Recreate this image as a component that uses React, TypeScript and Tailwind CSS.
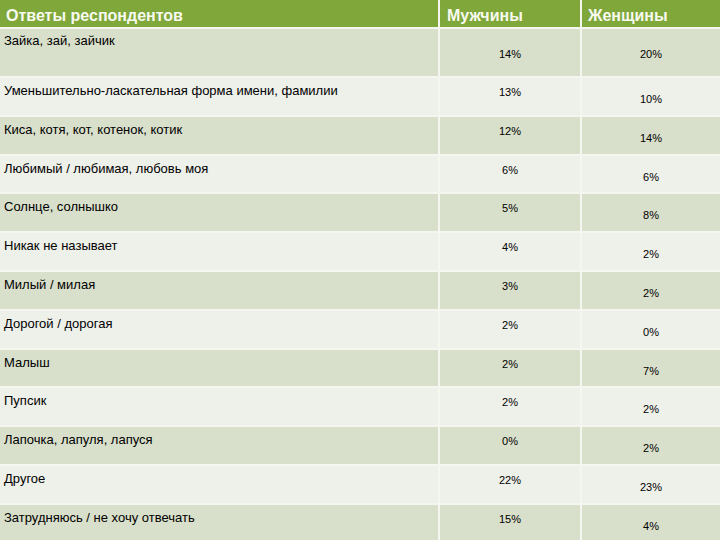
const rows: [string, string, string][] = [
  ["Уменьшительно-ласкательная форма имени, фамилии", "13%", "10%"],
  ["Киса, котя, кот, котенок, котик", "12%", "14%"],
  ["Любимый / любимая, любовь моя", "6%", "6%"],
  ["Солнце, солнышко", "5%", "8%"],
  ["Никак не называет", "4%", "2%"],
  ["Милый / милая", "3%", "2%"],
  ["Дорогой / дорогая", "2%", "0%"],
  ["Малыш", "2%", "7%"],
  ["Пупсик", "2%", "2%"],
  ["Лапочка, лапуля, лапуся", "0%", "2%"],
  ["Другое", "22%", "23%"],
  ["Затрудняюсь / не хочу отвечать", "15%", "4%"],
];

export default function App() {
  return (
    <div className="h-[540px] w-[720px] overflow-hidden bg-white font-['Liberation_Sans',Arial,sans-serif] text-black">
      <div className="flex h-[29px] border-b-2 border-[#f4f6ef] bg-[#7fa73a] text-[16px] font-bold text-[#f8faf0]">
        <div className="w-[438px] pl-[6px] pt-[4px]">Ответы респондентов</div>
        <div className="w-[142px] border-l-2 border-[#f4f6ef] pl-[7px] pt-[4px]">Мужчины</div>
        <div className="flex-1 border-l-2 border-[#f4f6ef] pl-[6px] pt-[4px]">Женщины</div>
      </div>

      <div className="flex h-[49px] border-b-2 border-[#f4f6ef] bg-[#d8dfca]">
        <div className="w-[438px] pl-[4px] pt-[4px] text-[13px] leading-4">Зайка, зай, зайчик</div>
        <div className="w-[142px] border-l-2 border-[#f4f6ef] pt-[18px] text-center text-[11px] leading-[14px]">14%</div>
        <div className="flex-1 border-l-2 border-[#f4f6ef] pt-[18px] text-center text-[11px] leading-[14px]">20%</div>
      </div>

      {rows.map(([label, men, women], i) => (
        <div
          key={label}
          className={`flex h-[38.8px] border-b-2 border-[#f4f6ef] ${i % 2 === 0 ? "bg-[#eef0ea]" : "bg-[#d8dfca]"}`}
        >
          <div className="w-[438px] pl-[4px] pt-[5px] text-[13px] leading-4">{label}</div>
          <div className="w-[142px] border-l-2 border-[#f4f6ef] pt-[7px] text-center text-[11px] leading-[14px]">{men}</div>
          <div className="flex-1 border-l-2 border-[#f4f6ef] pt-[14px] text-center text-[11px] leading-[14px]">{women}</div>
        </div>
      ))}
    </div>
  );
}
